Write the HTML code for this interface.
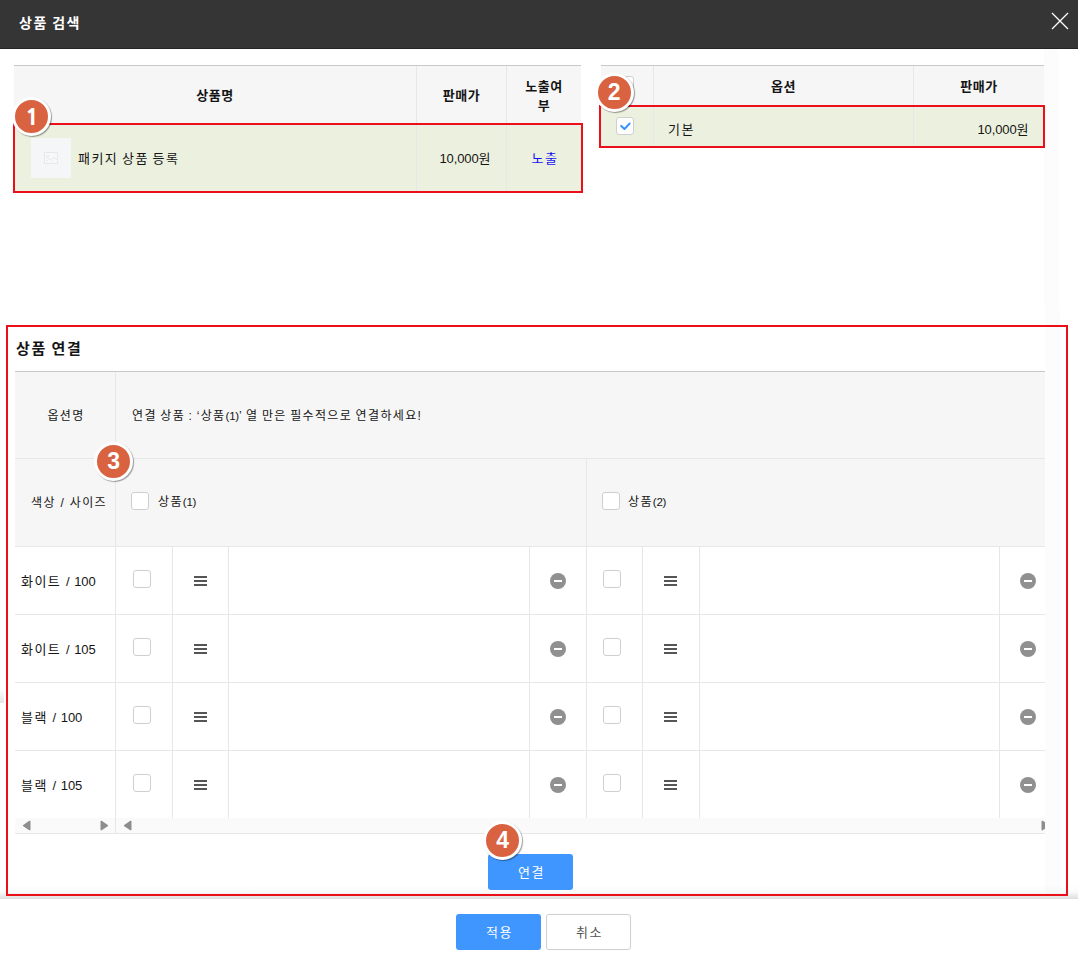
<!DOCTYPE html>
<html lang="ko">
<head>
<meta charset="utf-8">
<title>상품 검색</title>
<style>
*{box-sizing:border-box;margin:0;padding:0}
html,body{width:1078px;height:971px;overflow:hidden;background:#fff}
body{position:relative;font-family:"Liberation Sans","Noto Sans CJK KR",sans-serif;font-size:13px;color:#151515;line-height:1;letter-spacing:1.45px;word-spacing:-1.3px}
.n{letter-spacing:-.1px;word-spacing:1.2px}
.s{font-size:12px;letter-spacing:1.35px;word-spacing:-1.2px}
.s .n{font-size:11.5px;letter-spacing:-.2px}
.abs{position:absolute}
.t{position:absolute;white-space:nowrap;line-height:20px;height:20px;margin-top:1px}
.b{font-weight:bold;letter-spacing:.6px}
.c{text-align:center}
.r{text-align:right}
/* header */
#hd{left:0;top:0;width:1078px;height:49px;background:#353535;border-bottom:1px solid #242424}
#hd .ttl{left:19px;top:13px;color:#fff;font-size:14px;font-weight:bold;line-height:20px;letter-spacing:1.5px;word-spacing:-1px}
/* generic fills */
.th{background:#f6f6f6}
.sel{background:#ecf0df}
.vl{position:absolute;width:1px;background:#e7e7e7}
.hl{position:absolute;height:1px;background:#e7e7e7}
.top{position:absolute;height:1px;background:#c9c9c9}
.red{position:absolute;border:2px solid #ea0f18}
/* badge */
.bdg{position:absolute;width:39px;height:39px;border-radius:50%;background:#d96241;border:3px solid #fff;box-shadow:1px 1px 1px rgba(0,0,0,.38);color:#fff;font-family:"Liberation Sans",sans-serif;font-weight:bold;font-size:23px;line-height:33px;text-align:center;letter-spacing:0;text-indent:.5px}
.bdg.one{font-family:"NanumGothic","Liberation Sans",sans-serif;font-weight:800;font-size:23px;line-height:33px;text-indent:1.5px}

/* checkbox */
.cb{position:absolute;width:18px;height:18px;border:1px solid #cfcfcf;border-radius:3px;background:#fff}
/* hamburger */
.hm{position:absolute;width:13px;height:11px}
.hm i{position:absolute;left:0;width:13px;height:2px;background:#555}
/* minus */
.mn{position:absolute;width:16px;height:16px;border-radius:50%;background:#909090}
.mn i{position:absolute;left:4px;top:7px;width:8px;height:2px;background:#fff}
/* buttons */
.btn{position:absolute;width:85px;height:36px;border-radius:3px;font-size:13px;line-height:38px;text-align:center;padding-left:2px}
.btn.blue{background:#3f96ff;color:#fff}
.btn.wh{background:#fff;border:1px solid #cfcfcf;color:#555;line-height:36px}
</style>
</head>
<body>
<!-- scrollbar strip -->
<div class="abs" style="left:1044px;top:49px;width:15px;height:258px;background:#fcfcfc"></div>
<div class="abs" style="left:1045px;top:307px;width:15px;height:589px;background:#fcfcfc"></div>

<!-- header -->
<div id="hd" class="abs">
  <div class="abs ttl">상품 검색</div>
  <svg class="abs" style="left:1051px;top:12px" width="18" height="18" viewBox="0 0 18 18"><path d="M1 1L17 17M17 1L1 17" stroke="#fff" stroke-width="1.3" fill="none"/></svg>
</div>

<!-- LEFT TABLE -->
<div id="lt">
  <div class="top" style="left:14px;top:65px;width:567px"></div>
  <div class="abs th" style="left:14px;top:66px;width:567px;height:58px"></div>
  <div class="abs sel" style="left:14px;top:124px;width:567px;height:68px"></div>
  <div class="hl" style="left:14px;top:125px;width:567px;background:#eceee6"></div>
  <div class="vl" style="left:416px;top:66px;height:126px"></div>
  <div class="vl" style="left:506px;top:66px;height:126px"></div>
  <div class="t b c" style="left:14px;top:85px;width:402px">상품명</div>
  <div class="t b c" style="left:417px;top:85px;width:89px">판매가</div>
  <div class="t b c" style="left:507px;top:76px;width:74px">노출여</div>
  <div class="t b c" style="left:507px;top:94.5px;width:74px">부</div>
  <div class="abs" style="left:31px;top:138px;width:40px;height:40px;background:#f5f6f8"></div>
  <svg class="abs" style="left:44px;top:152px" width="14" height="12" viewBox="0 0 14 12"><rect x=".5" y=".5" width="13" height="11" fill="#f7f8fa" stroke="#e7e8ea"/><circle cx="3.5" cy="4.4" r="1.15" fill="none" stroke="#e0e1e3" stroke-width=".8"/><path d="M2 9.6L5.6 6.4L8.7 9.6M7.6 7.3L9.9 5.3L12.8 7.6" fill="none" stroke="#e2e3e5" stroke-width=".8"/></svg>
  <div class="t" style="left:78px;top:148px">패키지 상품 등록</div>
  <div class="t r" style="left:417px;top:148px;width:75px"><span class="n">10,000</span>원</div>
  <div class="t c" style="left:508px;top:148px;width:74px;color:#1414f0">노출</div>
  <div class="red" style="left:13px;top:123px;width:570px;height:70px"></div>
</div>

<!-- RIGHT TABLE -->
<div id="rt">
  <div class="top" style="left:601px;top:65px;width:443px"></div>
  <div class="abs th" style="left:601px;top:66px;width:443px;height:40px"></div>
  <div class="abs sel" style="left:601px;top:106px;width:443px;height:40px"></div>
  <div class="hl" style="left:601px;top:107px;width:443px;background:#eef0ea"></div>
  <div class="vl" style="left:653px;top:66px;height:80px"></div>
  <div class="vl" style="left:913px;top:66px;height:80px"></div>
  <div class="cb" style="left:616px;top:76px"></div>
  <div class="t b c" style="left:654px;top:76px;width:259px">옵션</div>
  <div class="t b c" style="left:914px;top:76px;width:130px">판매가</div>
  <div class="cb" style="left:616px;top:117px"></div>
  <svg class="abs" style="left:616px;top:117px" width="18" height="18" viewBox="0 0 18 18"><path d="M5.2 8.9L8.5 12L13.6 6.6" fill="none" stroke="#3392ff" stroke-width="2" stroke-linecap="round" stroke-linejoin="round"/></svg>
  <div class="t" style="left:668px;top:119px">기본</div>
  <div class="t r" style="left:914px;top:119px;width:116px"><span class="n">10,000</span>원</div>
  <div class="red" style="left:599px;top:105px;width:446px;height:43px"></div>
</div>

<div class="abs" style="left:0;top:885px;width:1078px;height:14px;background:linear-gradient(to bottom,rgba(0,0,0,0),rgba(0,0,0,.02) 50%,rgba(0,0,0,.13))"></div>
<div class="abs" style="left:0;top:688px;width:4px;height:15px;background:linear-gradient(to bottom,#fff,#f4f4f4 40%,#e4e4e4)"></div>
<!-- SECTION -->
<div id="sec">
  <div class="t b" style="left:16px;top:338px;font-size:15px;letter-spacing:1.7px">상품 연결</div>
  <div id="grid" class="abs" style="left:15px;top:371px;width:1030px;height:463px;overflow:hidden">
    <!-- coordinates inside grid are relative: x-15, y-371 -->
    <div class="top" style="left:0;top:0;width:1030px"></div>
    <div class="abs th" style="left:0;top:1px;width:1030px;height:175px"></div>
    <div class="hl" style="left:0;top:87px;width:1030px"></div>
    <div class="hl" style="left:0;top:175px;width:1030px"></div>
    <div class="hl" style="left:0;top:243px;width:1030px"></div>
    <div class="hl" style="left:0;top:311px;width:1030px"></div>
    <div class="hl" style="left:0;top:379px;width:1030px"></div>
    <div class="abs" style="left:0;top:447px;width:1030px;height:15px;background:#fafafa"></div>
    <div class="hl" style="left:0;top:462px;width:1030px"></div>
    <div class="vl" style="left:100px;top:1px;height:461px"></div>
    <div class="vl" style="left:571px;top:88px;height:359px"></div>
    <div class="vl" style="left:157px;top:176px;height:271px"></div>
    <div class="vl" style="left:213px;top:176px;height:271px"></div>
    <div class="vl" style="left:514px;top:176px;height:271px"></div>
    <div class="vl" style="left:627px;top:176px;height:271px"></div>
    <div class="vl" style="left:684px;top:176px;height:271px"></div>
    <div class="vl" style="left:984px;top:176px;height:271px"></div>
    <!--GRIDCONTENT-->
    <div class="t c s" style="left:1px;top:33.5px;width:100px">옵션명</div>
    <div class="t s" style="left:117px;top:33.5px">연결 상품 : ‘상품<span class="n">(1)</span>’ 열 만은 필수적으로 연결하세요!</div>
    <div class="t s" style="left:16px;top:121px;word-spacing:0">색상 / 사이즈</div>
    <div class="cb" style="left:116px;top:121px"></div>
    <div class="t s" style="left:143px;top:120px">상품<span class="n">(1)</span></div>
    <div class="cb" style="left:587px;top:121px"></div>
    <div class="t s" style="left:613px;top:120px">상품<span class="n">(2)</span></div>
    <div class="t" style="left:6px;top:200px">화이트<span class="n"> / 100</span></div>
    <div class="cb" style="left:118px;top:199px"></div>
    <div class="hm" style="left:179px;top:205px"><i style="top:0"></i><i style="top:4px"></i><i style="top:8px"></i></div>
    <div class="mn" style="left:535px;top:202px"><i></i></div>
    <div class="cb" style="left:588px;top:199px"></div>
    <div class="hm" style="left:649px;top:205px"><i style="top:0"></i><i style="top:4px"></i><i style="top:8px"></i></div>
    <div class="mn" style="left:1005px;top:202px"><i></i></div>
    <div class="t" style="left:6px;top:268px">화이트<span class="n"> / 105</span></div>
    <div class="cb" style="left:118px;top:267px"></div>
    <div class="hm" style="left:179px;top:273px"><i style="top:0"></i><i style="top:4px"></i><i style="top:8px"></i></div>
    <div class="mn" style="left:535px;top:270px"><i></i></div>
    <div class="cb" style="left:588px;top:267px"></div>
    <div class="hm" style="left:649px;top:273px"><i style="top:0"></i><i style="top:4px"></i><i style="top:8px"></i></div>
    <div class="mn" style="left:1005px;top:270px"><i></i></div>
    <div class="t" style="left:6px;top:336px">블랙<span class="n"> / 100</span></div>
    <div class="cb" style="left:118px;top:335px"></div>
    <div class="hm" style="left:179px;top:341px"><i style="top:0"></i><i style="top:4px"></i><i style="top:8px"></i></div>
    <div class="mn" style="left:535px;top:338px"><i></i></div>
    <div class="cb" style="left:588px;top:335px"></div>
    <div class="hm" style="left:649px;top:341px"><i style="top:0"></i><i style="top:4px"></i><i style="top:8px"></i></div>
    <div class="mn" style="left:1005px;top:338px"><i></i></div>
    <div class="t" style="left:6px;top:404px">블랙<span class="n"> / 105</span></div>
    <div class="cb" style="left:118px;top:403px"></div>
    <div class="hm" style="left:179px;top:409px"><i style="top:0"></i><i style="top:4px"></i><i style="top:8px"></i></div>
    <div class="mn" style="left:535px;top:406px"><i></i></div>
    <div class="cb" style="left:588px;top:403px"></div>
    <div class="hm" style="left:649px;top:409px"><i style="top:0"></i><i style="top:4px"></i><i style="top:8px"></i></div>
    <div class="mn" style="left:1005px;top:406px"><i></i></div>
    <svg class="abs" style="left:7px;top:449px" width="9" height="11" viewBox="0 0 9 11"><polygon points="7.7,1.5 7.7,9.6 1.7,5.55" fill="#8e8e8e" stroke="#8e8e8e" stroke-width="1.6" stroke-linejoin="round"/></svg>
    <svg class="abs" style="left:85px;top:449px" width="9" height="11" viewBox="0 0 9 11"><polygon points="1.3,1.5 1.3,9.6 7.3,5.55" fill="#8e8e8e" stroke="#8e8e8e" stroke-width="1.6" stroke-linejoin="round"/></svg>
    <svg class="abs" style="left:108px;top:449px" width="9" height="11" viewBox="0 0 9 11"><polygon points="7.7,1.5 7.7,9.6 1.7,5.55" fill="#8e8e8e" stroke="#8e8e8e" stroke-width="1.6" stroke-linejoin="round"/></svg>
    <svg class="abs" style="left:1026px;top:449px" width="9" height="11" viewBox="0 0 9 11"><polygon points="1.3,1.5 1.3,9.6 7.3,5.55" fill="#8e8e8e" stroke="#8e8e8e" stroke-width="1.6" stroke-linejoin="round"/></svg>
    <!--/GRIDCONTENT-->
  </div>
  <div class="red" style="left:6px;top:325px;width:1062px;height:571px"></div>
</div>

<!-- footer -->

<div class="btn blue" style="left:488px;top:854px">연결</div>
<div class="btn blue" style="left:456px;top:914px">적용</div>
<div class="btn wh" style="left:546px;top:914px">취소</div>

<!-- badges -->
<div class="bdg one" style="left:12px;top:97px">1</div>
<div class="bdg" style="left:594.5px;top:72.5px">2</div>
<div class="bdg" style="left:94px;top:442px">3</div>
<div class="bdg" style="left:483px;top:821px">4</div>
</body>
</html>
